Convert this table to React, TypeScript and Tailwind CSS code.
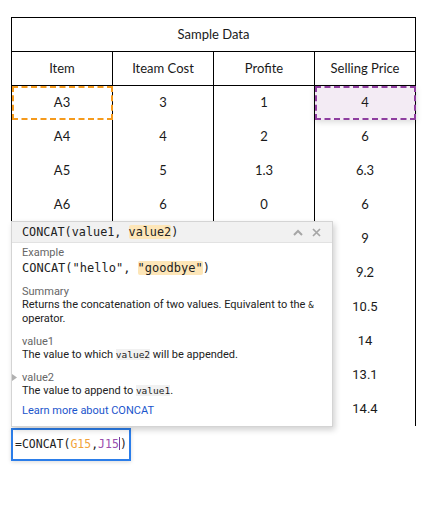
import React from "react";

// rows from A7 down sit under the formula hint, only the last column shows
const rows = [
  { item: "A3", cost: "3", profit: "1", price: "4", roboto: false },
  { item: "A4", cost: "4", profit: "2", price: "6", roboto: false },
  { item: "A5", cost: "5", profit: "1.3", price: "6.3", roboto: false },
  { item: "A6", cost: "6", profit: "0", price: "6", roboto: false },
  { item: "", cost: "", profit: "", price: "9", roboto: false },
  { item: "", cost: "", profit: "", price: "9.2", roboto: false },
  { item: "", cost: "", profit: "", price: "10.5", roboto: true },
  { item: "", cost: "", profit: "", price: "14", roboto: true },
  { item: "", cost: "", profit: "", price: "13.1", roboto: true },
  { item: "", cost: "", profit: "", price: "14.4", roboto: true },
];

const headers = ["Item", "Iteam Cost", "Profite", "Selling Price"];

const mono = "font-['DejaVu_Sans_Mono',monospace]";

function FormulaHint() {
  return (
    <div className="absolute left-[11px] top-[221px] w-[322px] border border-[#d4d4d4] bg-white shadow-[2px_3px_6px_rgba(0,0,0,0.18)] font-['Roboto',sans-serif] text-[#222]">
      <div className="flex h-[21px] items-center justify-between border-b border-[#e2e2e2] bg-[#f1f1f1] pl-[10px] pr-[11px]">
        <span className={`${mono} text-[11.8px] leading-[20px] text-[#222]`}>
          CONCAT(value1, <span className="rounded-[2px] bg-[#fde6b8]">value2</span>)
        </span>
        <div className="flex items-center gap-[9px]">
          <svg width="10" height="7" viewBox="0 0 10 7">
            <path d="M1 6 L5 2 L9 6" fill="none" stroke="#a6a6a6" strokeWidth="2" />
          </svg>
          <svg width="9" height="9" viewBox="0 0 9 9">
            <path d="M1 1 L8 8 M8 1 L1 8" fill="none" stroke="#a6a6a6" strokeWidth="1.7" />
          </svg>
        </div>
      </div>
      <div className="relative pl-[10px] pr-[6px] pb-[9px] pt-[3px] text-[11px]">
        <div className="leading-[14px] text-[#666]">Example</div>
        <div className={`${mono} text-[12px] leading-[16px]`}>
          CONCAT("hello", <span className="rounded-[2px] bg-[#fde6b8]">"goodbye"</span>)
        </div>
        <div className="mt-[9px] leading-[13px] text-[#666]">Summary</div>
        <div className="leading-[13px]">
          Returns the concatenation of two values. Equivalent to the{" "}
          <span className={`${mono} text-[9px]`}>&amp;</span> operator.
        </div>
        <div className="mt-[10px] leading-[13px] text-[#666]">value1</div>
        <div className="leading-[13px]">
          The value to which <span className={`${mono} bg-[#f1f1f1] text-[9.5px]`}>value2</span> will be appended.
        </div>
        <div className="relative mt-[10px] leading-[13px] text-[#666]">
          <svg className="absolute left-[-10px] top-[3px]" width="5" height="7" viewBox="0 0 5 7">
            <path d="M0 0 L5 3.5 L0 7 Z" fill="#b0b0b0" />
          </svg>
          value2
        </div>
        <div className="leading-[13px]">
          The value to append to <span className={`${mono} bg-[#f1f1f1] text-[9.5px]`}>value1</span>.
        </div>
        <div className="mt-[7px] leading-[13px] text-[#1a55cc]">Learn more about CONCAT</div>
      </div>
    </div>
  );
}

export default function App() {
  return (
    <div className="relative h-[507px] w-[435px] bg-white pl-[11px] pt-[17px]">
      <table className="w-[405px] table-fixed border-collapse font-['Lato',sans-serif] text-[13px] text-[#1a1a1a]">
        <thead>
          <tr className="h-[34px]">
            <th colSpan={4} className="border border-black font-normal">
              Sample Data
            </th>
          </tr>
          <tr className="h-[34px]">
            {headers.map((h) => (
              <th key={h} className="border border-black font-normal">
                {h}
              </th>
            ))}
          </tr>
        </thead>
        <tbody>
          {rows.map((r, i) => (
            <tr key={i} className="h-[34px]">
              <td
                className={`border-x border-black p-0 text-center ${
                  i === 0 ? "outline-2 -outline-offset-2 outline-dashed outline-[#f59a1c]" : ""
                }`}
              >
                {r.item}
              </td>
              <td className="border-x border-black p-0 text-center">{r.cost}</td>
              <td className="border-x border-black p-0 text-center">{r.profit}</td>
              <td
                className={`border-x border-black p-0 text-center ${
                  r.roboto ? "font-['Roboto',sans-serif]" : ""
                } ${
                  i === 0
                    ? "bg-[#f3ebf4] shadow-[0_2px_6px_rgba(0,0,0,0.15)] outline-2 -outline-offset-2 outline-dashed outline-[#8e3d9f]"
                    : ""
                }`}
              >
                {r.price}
              </td>
            </tr>
          ))}
        </tbody>
      </table>

      <div className="mt-[2px] h-[33px] w-[120px] border-2 border-[#2b7de9] bg-white pl-[2px] shadow-[0_1px_4px_rgba(0,0,0,0.15)]">
        <span className={`${mono} text-[11.5px] leading-[20px] text-[#222]`}>
          =CONCAT(<span className="text-[#f2a33a]">G15</span>,<span className="text-[#9a4fae]">J15</span>
          <span className="inline-block h-[13px] w-[1px] translate-y-[2px] bg-[#7a3f9e]" />)
        </span>
      </div>

      <FormulaHint />
    </div>
  );
}
